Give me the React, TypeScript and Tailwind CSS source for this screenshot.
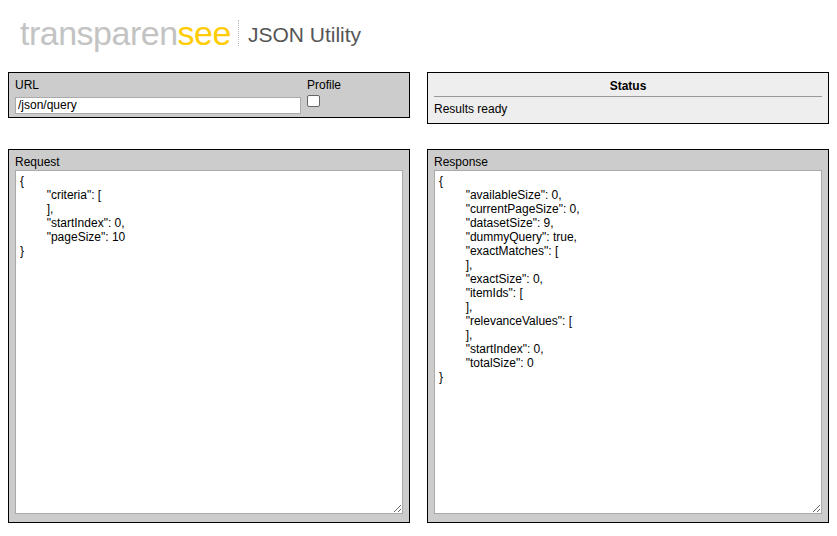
import React from "react";

const req = `{
\t"criteria": [
\t],
\t"startIndex": 0,
\t"pageSize": 10
}`;
const res = `{
\t"availableSize": 0,
\t"currentPageSize": 0,
\t"datasetSize": 9,
\t"dummyQuery": true,
\t"exactMatches": [
\t],
\t"exactSize": 0,
\t"itemIds": [
\t],
\t"relevanceValues": [
\t],
\t"startIndex": 0,
\t"totalSize": 0
}`;

function Area({ title, text }: { title: string; text: string }) {
  return (
    <div className="flex-1 h-[374px] border border-black bg-[#cccccc] px-[6px] pt-[5px] pb-[8px] flex flex-col">
      <div className="text-[12px] leading-[14px] text-black">{title}</div>
      <textarea
        readOnly
        value={text}
        className="flex-1 mt-[1px] w-full bg-white border border-[#aaa] px-[4px] py-[3px] text-[12px] leading-[14px] text-black resize-y outline-none [tab-size:8]"
        style={{ fontFamily: "'Liberation Sans', Arial, sans-serif" }}
      />
    </div>
  );
}

export default function App() {
  return (
    <div className="w-[837px] h-[536px] bg-white" style={{ fontFamily: "'Liberation Sans', Arial, sans-serif" }}>
      <div className="flex items-center h-[72px] pl-[20px] pb-[6px]">
        <span className="text-[34px] tracking-[-0.5px] text-[#c3c3c3] leading-none">
          transparen<span className="text-[#ffcc00]">see</span>
        </span>
        <span className="ml-[7px] mr-[9px] h-[26px] border-l border-dotted border-[#bbb]" />
        <span className="text-[21px] text-[#555] leading-none mt-[3px]">JSON Utility</span>
      </div>
      <div className="flex gap-[17px] px-[8px] items-start h-[77px]">
        <div className="flex-1 h-[46px] border border-black bg-[#cccccc] px-[6px] pt-[5px] flex gap-[6px]">
          <div className="flex-1">
            <div className="text-[12px] leading-[14px]">URL</div>
            <input
              readOnly
              value="/json/query"
              className="w-full h-[17px] bg-white border border-[#aaa] px-[2px] text-[12px] leading-[14px] outline-none"
            />
          </div>
          <div className="w-[96px]">
            <div className="text-[12px] leading-[14px]">Profile</div>
            <div className="mt-[3px] w-[13px] h-[12px] rounded-[2px] border border-[#666] bg-white" />
          </div>
        </div>
        <div className="flex-1 h-[52px] border border-black bg-[#eeeeee] px-[6px] pt-[6px]">
          <div className="text-center text-[12px] font-bold leading-[14px] pb-[3px] border-b border-[#999]">Status</div>
          <div className="text-[12px] leading-[14px] mt-[5px]">Results ready</div>
        </div>
      </div>
      <div className="flex gap-[17px] px-[8px]">
        <Area title="Request" text={req} />
        <Area title="Response" text={res} />
      </div>
    </div>
  );
}
